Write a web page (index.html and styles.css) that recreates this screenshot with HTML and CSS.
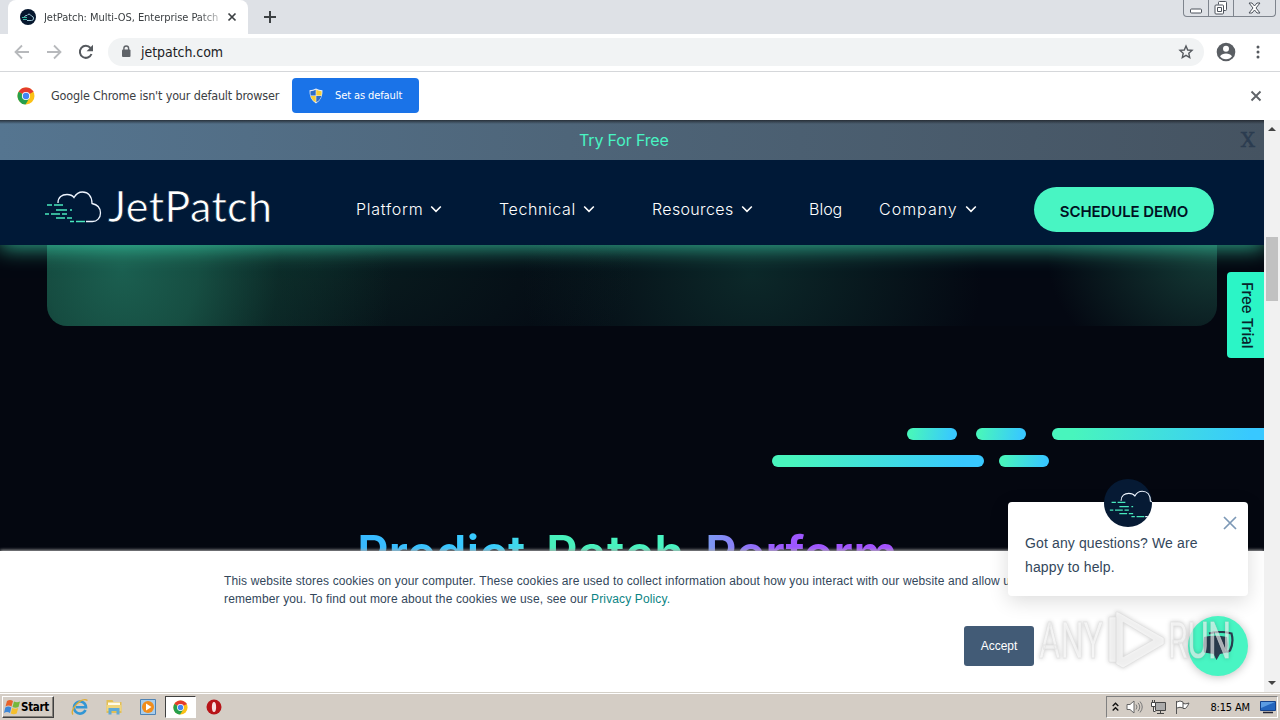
FILE: index.html
```html
<!DOCTYPE html>
<html lang="en">
<head>
  <meta charset="UTF-8" />
  <meta name="viewport" content="width=device-width, initial-scale=1.0"/>
  <title>JetPatch: Multi-OS, Enterprise Patch</title>
  <link rel="stylesheet" href="styles.css">
</head>
<body>

<!-- shared shapes -->
<svg class="defs" width="0" height="0">
  <defs>
    <symbol id="cloud" viewBox="0 0 58 34">
      <path d="M14 12C14 6 18 3.500 23 3.500C26 3.500 28.500 4.500 30 6.500C32 3 35 1 38.500 1C44 1 48 5 48 12.500C53 13.500 56.500 17 56.500 22C56.500 27 53 30.500 48.500 30.500H42" fill="none" stroke="#eef5ff" stroke-width="1.300"/>
      <path d="M3 14.500h5m2 0h9M12 19.500h11m3 0h2M1 23.500h4m2 0h9m2 0h5M12 27.500h9m2 0h5M26 31h4m2 0h9" transform="translate(0 -.5)" fill="none" stroke="#48e8bd" stroke-width="1.400"/>
    </symbol>
    <symbol id="chrome" viewBox="0 0 18 18">
      <circle cx="9" cy="9" r="8.500" fill="#fbc116"/>
      <path d="M9 9L1.600 4.800A8.500 8.500 0 0 1 16.400 4.800Z" fill="#e33b2e"/>
      <path d="M9 9L1.600 4.800A8.500 8.500 0 0 0 8.500 17.500L12.500 11Z" fill="#269f4c"/>
      <path d="M9 5h7.500l-.6-1.200H6z" fill="#e33b2e"/>
      <circle cx="9" cy="9" r="4.100" fill="#fff"/>
      <circle cx="9" cy="9" r="3.200" fill="#4285f4"/>
    </symbol>
    <symbol id="chevron" viewBox="0 0 12 8">
      <path d="M1.200 1.500L6 6.300l4.800-4.800" fill="none" stroke="#fff" stroke-width="1.600"/>
    </symbol>
  </defs>
</svg>

<div class="tabstrip">
  <div class="tab">
    <span class="favicon"><svg width="14" height="9" viewBox="0 0 14 9"><path d="M3.500 4Q4 2 6 2.500 8-.5 10.500 3q2.500.5 2 3-.5 1.500-2 1.500H6" fill="none" stroke="#9fc6d6"/><path d="M1 4.500h5M2 6.500h4" stroke="#35b8a0"/></svg></span>
    <span class="tab-title">JetPatch: Multi-OS, Enterprise Patch</span>
    <svg width="10" height="10" viewBox="0 0 10 10"><path d="M1.500 1.500l7 7m0-7l-7 7" stroke="#3c4043" stroke-width="1.700"/></svg>
  </div>
  <svg class="new-tab" width="14" height="14" viewBox="0 0 14 14"><path d="M7 1v12M1 7h12" stroke="#3c4043" stroke-width="2"/></svg>
  <div class="window-buttons">
    <span><svg width="13" height="6" viewBox="0 0 13 6"><rect x=".5" y="1" width="11" height="4" rx="1" fill="#fff" stroke="#4d535c"/></svg></span>
    <span><svg width="14" height="14" viewBox="0 0 14 14"><path d="M4.500 3.500v-2q0-1 1-1h6q1 0 1 1v7q0 1-1 1h-2" fill="#fff" stroke="#4d535c"/><rect x="1" y="4" width="8.500" height="9" rx="1" fill="#fff" stroke="#4d535c"/><path d="M3.500 6.500h4v4h-4z" fill="none" stroke="#4d535c"/></svg></span>
    <span><svg width="13" height="12" viewBox="0 0 13 12"><path d="M1 1h3l2.500 3L9 1h3L8 6l4 5H9L6.500 8 4 11H1l4-5z" fill="#fff" stroke="#4d535c"/></svg></span>
  </div>
</div>

<div class="toolbar">
  <svg width="16" height="16" viewBox="0 0 16 16"><path d="M15 8H2M8 1.500L1.500 8 8 14.500" fill="none" stroke="#b7b9bc" stroke-width="1.800"/></svg>
  <svg width="16" height="16" viewBox="0 0 16 16"><path d="M1 8h13M8 1.500L14.500 8 8 14.500" fill="none" stroke="#b7b9bc" stroke-width="1.800"/></svg>
  <svg width="16" height="16" viewBox="0 0 16 16"><path d="M13.500 10A6 6 0 1 1 12.500 4" fill="none" stroke="#55595e" stroke-width="2"/><path d="M15 .8v6.400H8.600z" fill="#55595e"/></svg>
  <div class="address">
    <svg width="10" height="13" viewBox="0 0 10 13"><rect x="1" y="4.500" width="8.500" height="7.500" rx="1" fill="#5f6368"/><path d="M2.900 5V3.300a2.300 2.300 0 0 1 4.700 0V5" fill="none" stroke="#5f6368" stroke-width="1.400"/></svg>
    <span class="url">jetpatch.com</span>
    <svg width="16" height="16" viewBox="0 0 16 16"><path d="M8 2l1.700 4 4.300.4-3.200 2.900.9 4.300L8 11.300l-3.700 2.300.9-4.300L2 6.400 6.300 6z" fill="none" stroke="#55595e" stroke-width="1.400"/></svg>
  </div>
  <svg width="20" height="20" viewBox="0 0 20 20"><circle cx="10" cy="10" r="9.300" fill="#5a5e63"/><circle cx="10" cy="6.800" r="3" fill="#fff"/><path d="M4 14.300Q6 11.500 10 11.500t6 2.800Q14 17.300 10 17.300T4 14.300" fill="#fff"/></svg>
  <svg class="menu-dots" width="4" height="16" viewBox="0 0 4 16"><g fill="#55595e"><circle cx="2" cy="3" r="1.500"/><circle cx="2" cy="8" r="1.500"/><circle cx="2" cy="13" r="1.500"/></g></svg>
</div>

<div class="infobar">
  <svg width="18" height="18"><use href="#chrome"/></svg>
  <span class="info-text">Google Chrome isn't your default browser</span>
  <button class="default-btn">
    <svg width="14" height="16" viewBox="0 0 14 16"><path d="M7 .5Q10 2 13.500 2.200 14 11 7 15.500 0 11 .5 2.200 4 2 7 .5" fill="#e8edf5"/><path d="M6.700 1.800v5.700H1.600Q1.300 5 1.500 3.200 4.500 3 6.700 1.800M7.300 8.100h5Q11.500 12 7.300 14.300" fill="#2d6cc8"/><path d="M7.300 1.800v5.700h5.100q.3-2.500.1-4.300-3-.2-5.200-1.400M6.700 8.100h-5Q2.500 12 6.700 14.300" fill="#f7ce35"/></svg>
    <span>Set as default</span>
  </button>
  <svg class="info-close" width="12" height="12" viewBox="0 0 12 12"><path d="M1.500 1.500l9 9m0-9l-9 9" stroke="#5f6368" stroke-width="1.900"/></svg>
</div>

<main class="page">
  <div class="viewport">
    <div class="promo">
      <a>Try For Free</a>
      <span class="promo-close">X</span>
    </div>

    <header class="site-header">
      <svg class="logo" width="230" height="52" viewBox="0 0 230 52">
        <svg width="58" height="34" y="10"><use href="#cloud"/></svg>
        <text class="logo-text" x="64" y="41" textLength="164">JetPatch</text>
      </svg>
      <nav>
        <a class="platform">Platform <svg width="12" height="8"><use href="#chevron"/></svg></a>
        <a class="technical">Technical <svg width="12" height="8"><use href="#chevron"/></svg></a>
        <a class="resources">Resources <svg width="12" height="8"><use href="#chevron"/></svg></a>
        <a>Blog</a>
        <a class="company">Company <svg width="12" height="8"><use href="#chevron"/></svg></a>
      </nav>
      <button class="demo-btn">SCHEDULE DEMO</button>
    </header>

    <section class="hero-card"></section>

    <section class="dashes">
      <div class="dash-row">
        <i class="dash"></i><i class="dash"></i><i class="dash long"></i>
      </div>
      <div class="dash-row second">
        <i class="dash long"></i><i class="dash"></i>
      </div>
    </section>

    <h1 class="slogan">
      <span class="blue">Predict.</span>
      <span class="green">Patch.</span>
      <span class="purple">Perform</span>
    </h1>

    <div class="free-trial">Free Trial</div>

    <div class="cookies">
      <p>This website stores cookies on your computer. These cookies are used to collect information about how you interact with our website and allow us to<br>remember you. To find out more about the cookies we use, see our <a>Privacy Policy.</a></p>
      <button class="accept">Accept</button>
    </div>

    <div class="chat">
      <span class="chat-avatar"><svg width="50" height="30"><use href="#cloud"/></svg></span>
      <svg class="chat-close" width="14" height="14" viewBox="0 0 14 14"><path d="M1 1l12 12M13 1L1 13" stroke="#7c98b6" stroke-width="1.700"/></svg>
      <p>Got any questions? We are<br>happy to help.</p>
    </div>
    <div class="chat-button">
      <svg width="32" height="30" viewBox="0 0 32 30"><path d="M7 2.500Q18-.5 29.500 2.500q2.500 9-1.500 17l-3 1.500" fill="none" stroke="#2b3e50" stroke-width="2.200"/><path d="M2 6Q13 3.500 25 6q1.500 8 0 15.500l-7 1.500-3.500 6-3-6-9.500-1.500q-1.500-8 0-15.500" fill="#2b3e50"/></svg>
    </div>

    <svg class="watermark" width="204" height="66" viewBox="0 0 204 66">
      <g class="mark">
        <text x="3" y="50" textLength="64" lengthAdjust="spacingAndGlyphs">ANY</text>
        <text x="132" y="50" textLength="63" lengthAdjust="spacingAndGlyphs">RUN</text>
        <path d="M73 9h7v45h-7zM82 4l46 26v6L87 60l-7-4V4zm5 10v35l30-17z" fill-rule="evenodd"/>
      </g>
    </svg>
  </div>

  <div class="scrollbar">
    <i class="arrow up"></i>
    <i class="thumb"></i>
    <i class="arrow down"></i>
  </div>
</main>

<footer class="taskbar">
  <button class="start">
    <svg width="17" height="16" viewBox="0 0 17 16"><path d="M3 2q3-2 6 0L7.500 7.500q-3-2-6 0z" fill="#e8622a"/><path d="M10 2.500q3 1.500 6 0L14.500 8q-3 1.500-6 0z" fill="#75b73b"/><path d="M1.300 8.500q3-2 6 0L6 14q-3-2-6 0z" fill="#3d87d8"/><path d="M8.200 9q3 1.500 6 0l-1.500 5.500q-3 1.500-6 0z" fill="#f5bf2d"/></svg>
    <span>Start</span>
  </button>
  <div class="quick">
    <span><svg width="18" height="18" viewBox="0 0 18 18"><path d="M14.500 12A6 6 0 1 1 15 9.200H5" fill="none" stroke="#3296d4" stroke-width="2.600"/><path d="M2 16.500C-2 12 11-2 16.500 2.500" fill="none" stroke="#dfad35" stroke-width="1.400"/></svg></span>
    <span><svg width="18" height="18" viewBox="0 0 18 18"><path d="M1.500 2h6l1 2h8v11h-15z" fill="#e3bf55"/><path d="M3 4.500h12v4H3z" fill="#fffbe8"/><path d="M1.500 7h15v6h-15z" fill="#f0d57c"/><path d="M3.500 16.500V10h11v6.500h-3V13h-5v3.500z" fill="#5fa9d6"/></svg></span>
    <span><svg width="18" height="18" viewBox="0 0 18 18"><path d="M1.500 1.500h15v15h-15z" fill="#a8cdec" stroke="#4e83b4"/><circle cx="9" cy="9" r="6" fill="#f18d1c"/><path d="M7 5.500v7L12.500 9z" fill="#fff"/></svg></span>
    <span class="running"><svg width="15" height="15"><use href="#chrome"/></svg></span>
    <span><svg width="16" height="16" viewBox="0 0 16 16"><circle cx="8" cy="8" r="7.500" fill="#b71418"/><ellipse cx="8" cy="8" rx="2.100" ry="5" fill="#f7dfdf"/></svg></span>
  </div>
  <div class="tray">
    <svg width="7" height="10" viewBox="0 0 7 10"><path d="M.7 4L3.500 1.300 6.300 4M.7 8.500l2.800-2.700 2.800 2.700" fill="none" stroke="#111" stroke-width="1.400"/></svg>
    <svg width="17" height="16" viewBox="0 0 17 16"><path d="M1 5.500h3L8 2v12l-4-3.500H1z" fill="#fff" stroke="#666"/><path d="M10 5.500q2 2.500 0 5M12 3.800q3.500 4.200 0 8.400M14 2.500q4.500 5.500 0 11" fill="none" stroke="#777"/></svg>
    <svg width="17" height="16" viewBox="0 0 17 16"><path d="M5.500 3.500h10v8h-10zM7 14.500h7M10.500 12v2.500" fill="#aaa" stroke="#444"/><path d="M1.500 3.500h4v4h-4zM2.500 1v2.500m2-2.500v2.500M3.500 7.500v5h2" fill="#fff" stroke="#444"/></svg>
    <svg width="17" height="16" viewBox="0 0 17 16"><path d="M2.500 15V2M3 3q3-2 6 0v6Q6 7.500 3 9M9 4.500q2.500 1 6-.5-1 3-3.500 5.500H9" fill="#fff" stroke="#555"/></svg>
    <span class="clock">8:15 AM</span>
    <svg width="16" height="14" viewBox="0 0 16 14"><path d="M.5 1.500h15v9H.5z" fill="#2465bd" stroke="#16428a"/><path d="M1 2h14L1 8z" fill="#5c9ce2"/><path d="M3 12.500h10" stroke="#223" stroke-width="1.500"/></svg>
  </div>
</footer>

</body>
</html>
```

FILE: styles.css
```css
* {
  box-sizing: border-box;
}
body {
  margin: 0;
  width: 1280px;
  height: 720px;
  display: flex;
  flex-direction: column;
  overflow: hidden;
  background: #fff;
  font-family: "DejaVu Sans Condensed", "DejaVu Sans", sans-serif;
}
svg {
  display: block;
  flex: none;
}
.defs {
  position: absolute;
}
p, h1 {
  margin: 0;
}
button {
  border: none;
  padding: 0;
  font: inherit;
}

/* browser chrome */
.tabstrip {
  height: 34px;
  flex: none;
  display: flex;
  background: #dee1e6;
  padding-left: 8px;
}
.tab {
  width: 240px;
  display: flex;
  align-items: center;
  padding: 0 11px 0 12px;
  background: #fff;
  border-radius: 8px 8px 0 0;
}
.favicon {
  width: 16px;
  height: 16px;
  border-radius: 50%;
  background: #06172e;
  display: flex;
  align-items: center;
  justify-content: center;
  flex: none;
}
.tab-title {
  width: 175px;
  margin: 0 8px 0 8px;
  font-size: 11px;
  letter-spacing: -0.05px;
  white-space: nowrap;
  overflow: hidden;
  color: #3c4043;
  -webkit-mask-image: linear-gradient(90deg, #000 88%, rgba(0, 0, 0, 0.3));
  mask-image: linear-gradient(90deg, #000 88%, rgba(0, 0, 0, 0.3));
}
.new-tab {
  margin: 10px 0 0 15px;
}
.window-buttons {
  display: flex;
  height: 17px;
  margin-left: auto;
  margin-right: 4px;
  border: 1px solid #7e848d;
  border-top: none;
  border-radius: 0 0 4px 4px;
}
.window-buttons span {
  width: 25px;
  display: flex;
  align-items: center;
  justify-content: center;
  border-right: 1px solid #7e848d;
}
.window-buttons span:first-child {
  padding-top: 5px;
}
.window-buttons span:last-child {
  width: 41px;
  border: none;
}
.toolbar {
  height: 38px;
  flex: none;
  display: flex;
  align-items: center;
  gap: 16px;
  padding: 0 20px 2px 14px;
  border-bottom: 1px solid #d5d7da;
}
.address {
  width: 1096px;
  height: 28px;
  margin-left: -2px;
  padding: 0 10px 0 13px;
  display: flex;
  align-items: center;
  border-radius: 14px;
  background: #f1f3f4;
}
.url {
  flex: 1;
  margin-left: 10px;
  font-size: 14px;
  letter-spacing: -0.05px;
  color: #202124;
}
.toolbar .address + svg {
  margin-left: -4px;
}
.menu-dots {
  margin-left: 4px;
}
.infobar {
  height: 48px;
  flex: none;
  display: flex;
  align-items: center;
  padding: 0 18px 0 17px;
  color: #3c4043;
}
.info-text {
  width: 241px;
  margin: -1px 0 0 16px;
  font-size: 12.500px;
  letter-spacing: -0.17px;
  white-space: nowrap;
}
.default-btn {
  width: 127px;
  height: 35px;
  margin-top: -1px;
  display: flex;
  align-items: center;
  padding-left: 17px;
  gap: 12px;
  border-radius: 4px;
  background: #1a73e8;
  color: #fff;
  font-size: 11px;
  letter-spacing: -0.1px;
}
.info-close {
  margin-left: auto;
}

/* site */
.page {
  flex: 1;
  min-height: 0;
  display: flex;
}
.viewport {
  position: relative;
  width: 1264px;
  overflow: hidden;
  background: #040710;
  font-family: Inter, sans-serif;
}
.promo {
  position: relative;
  z-index: 1;
  height: 40px;
  display: flex;
  align-items: center;
  padding-right: 9px;
  background: linear-gradient(180deg, rgba(30, 34, 40, 0.8), rgba(30, 34, 40, 0) 4px), linear-gradient(90deg, #557590, #4e6579 45%, #455361);
}
.promo a {
  margin-left: 579px;
  font-size: 16px;
  letter-spacing: -0.15px;
  color: #48f5c3;
}
.promo-close {
  margin-left: auto;
  font: 20px "DejaVu Serif", serif;
  color: #2b3c50;
  -webkit-text-stroke: 0.5px #2b3c50;
}
.site-header {
  position: relative;
  height: 85px;
  display: flex;
  align-items: center;
  padding: 13px 50px 0 44px;
  background: #001937;
  box-shadow: 0 3px 20px 0 rgba(66, 235, 190, 0.7);
}
.logo {
  margin-top: -5px;
}
.logo-text {
  font: 400 43px Lato, sans-serif;
  fill: #fff;
  stroke: #001937;
  stroke-width: 0.700px;
}
nav {
  display: grid;
  grid-template-columns: 143px 153px 157px 70px 155px;
  margin-left: 82px;
}
nav a {
  display: flex;
  align-items: center;
  gap: 7px;
  font-size: 16px;
  font-weight: 300;
  color: #fff;
}
.platform {
  letter-spacing: 0.75px;
}
.technical {
  letter-spacing: 0.6px;
}
.resources {
  letter-spacing: 0.35px;
}
.company {
  letter-spacing: 1px;
}
.demo-btn {
  width: 180px;
  height: 45px;
  border-radius: 23px;
  background: #48f5c3;
  color: #001022;
  font-size: 15px;
  font-weight: 600;
  letter-spacing: -0.1px;
  padding-top: 4px;
}
.hero-card {
  height: 81px;
  margin: 0 47px;
  border-radius: 0 0 20px 20px;
  background:
    radial-gradient(ellipse 270px 300px at 75px 25px, #1b5f50, rgba(25, 88, 73, 0.85) 28%, rgba(17, 64, 54, 0.45) 58%, transparent),
    radial-gradient(ellipse 400px 200px at 270px 20px, rgba(15, 52, 46, 0.5), transparent 80%),
    radial-gradient(ellipse 230px 190px at 705px 30px, #0c2829, transparent),
    radial-gradient(ellipse 170px 130px at 1170px 10px, #153c37, transparent),
    #040812;
}
.dashes {
  margin-top: 102px;
  padding-left: 772px;
}
.dash-row {
  display: flex;
  gap: 19px;
  padding-left: 135px;
}
.dash-row.second {
  margin-top: 15px;
  gap: 15px;
  padding-left: 0;
}
.dash {
  width: 50px;
  height: 12px;
  flex: none;
  border-radius: 6px;
  background: linear-gradient(100deg, #48f5bd 10%, #38c8ff 90%);
}
.dash.long {
  width: 212px;
}
.dash-row:first-child .long {
  width: 220px;
  margin-left: 7px;
}
.slogan {
  display: grid;
  grid-template-columns: 189px 159px 240px;
  margin: 56px 0 0 357px;
  font-size: 49px;
  line-height: 62px;
  font-weight: 600;
  white-space: nowrap;
}
.slogan span {
  -webkit-background-clip: text;
  background-clip: text;
  color: transparent;
}
.blue {
  background-image: linear-gradient(90deg, #38b8ff, #38ccff 70%, #48e5d8);
}
.green {
  letter-spacing: 0.9px;
  background-image: linear-gradient(90deg, #48f0bb, #48f5c3);
}
.purple {
  background-image: linear-gradient(90deg, #7b9cf2, #9c58ff 30%, #a94eff);
}
.free-trial {
  position: absolute;
  right: 0;
  top: 152px;
  width: 37px;
  height: 86px;
  padding-left: 4px;
  writing-mode: vertical-rl;
  display: flex;
  align-items: center;
  justify-content: center;
  border-radius: 4px 0 0 4px;
  background: #2bf5c6;
  color: #07232b;
  font-size: 15px;
  font-weight: 500;
}
.cookies {
  position: absolute;
  left: 0;
  right: 0;
  top: 431px;
  bottom: 0;
  padding: 21px 230px 0 224px;
  background: #fff;
  box-shadow: 0 -1px 3px #aaa;
  font-family: "Liberation Sans", Arial, sans-serif;
  font-size: 12px;
  line-height: 18px;
  letter-spacing: 0.13px;
  color: #33475b;
}
.cookies p {
  white-space: nowrap;
}
.cookies a {
  color: #0b8484;
}
.accept {
  display: block;
  width: 70px;
  height: 40px;
  margin: 18px 0 0 auto;
  border-radius: 3px;
  background: #425b76;
  color: #fff;
}
.chat {
  position: absolute;
  left: 1008px;
  top: 382px;
  width: 240px;
  height: 94px;
  padding: 29px 17px;
  border-radius: 4px;
  background: #fff;
  box-shadow: 0 5px 20px rgba(0, 0, 0, 0.14);
  font-family: "Liberation Sans", Arial, sans-serif;
  font-size: 14px;
  line-height: 24px;
  letter-spacing: 0.13px;
  color: #33475b;
}
.chat-avatar {
  position: absolute;
  left: 96px;
  top: -23px;
  width: 48px;
  height: 48px;
  border-radius: 50%;
  overflow: hidden;
  display: flex;
  align-items: center;
  padding: 4px 0 0 5px;
  background: #061a34;
}
.chat-close {
  position: absolute;
  right: 11px;
  top: 14px;
}
.chat-button {
  position: absolute;
  left: 1188px;
  top: 496px;
  width: 60px;
  height: 60px;
  border-radius: 50%;
  display: flex;
  align-items: center;
  justify-content: center;
  background: #48f5c3;
  box-shadow: 0 1px 10px rgba(0, 0, 0, 0.25);
}
.watermark {
  position: absolute;
  left: 1036px;
  top: 488px;
}
.mark {
  font: 400 50px Roboto, sans-serif;
  fill: #fff;
  fill-opacity: 0.6;
  stroke: #dcdcdc;
  stroke-opacity: 0.6;
  stroke-width: 1px;
  filter: drop-shadow(0 0 2px rgba(0, 0, 0, 0.28));
}
.scrollbar {
  width: 16px;
  display: flex;
  flex-direction: column;
  align-items: center;
  padding: 7px 0;
  background: #f1f1f1;
}
.arrow {
  border: 4px solid transparent;
}
.up {
  border-top: none;
  border-bottom-color: #444;
}
.down {
  border-bottom: none;
  border-top-color: #444;
  margin-top: auto;
}
.thumb {
  width: 12px;
  height: 64px;
  margin-top: 106px;
  background: #c1c1c1;
}

/* taskbar */
.taskbar {
  height: 28px;
  flex: none;
  display: flex;
  align-items: center;
  padding: 1px 2px 0;
  border-top: 1px solid #d4d0c8;
  box-shadow: inset 0 1px #fff;
  background: #d4cdc5;
}
.start {
  width: 52px;
  height: 22px;
  display: flex;
  align-items: center;
  padding-left: 1px;
  border: 1px solid;
  border-color: #fff #404040 #404040 #fff;
  box-shadow: inset -1px -1px #85817b;
  background: #d4cdc5;
  color: #000;
  font-size: 11.500px;
  font-weight: bold;
  letter-spacing: -0.3px;
}
.quick {
  display: flex;
  margin-left: 9px;
}
.quick span {
  width: 34px;
  height: 22px;
  display: flex;
  align-items: center;
  justify-content: center;
}
.quick .running {
  width: 31px;
  margin: 0 1px 0 0;
  background: #fff;
  border: 1px solid;
  border-color: #404040 #fff #fff #404040;
}
.tray {
  width: 172px;
  height: 22px;
  display: flex;
  align-items: center;
  gap: 7px;
  margin-left: auto;
  padding: 0 1px 0 5px;
  border: 1px solid;
  border-color: #808080 #fff #fff #808080;
}
.clock {
  margin-left: auto;
  margin-right: 3px;
  font-size: 11px;
  letter-spacing: -0.15px;
  color: #000;
}
```
